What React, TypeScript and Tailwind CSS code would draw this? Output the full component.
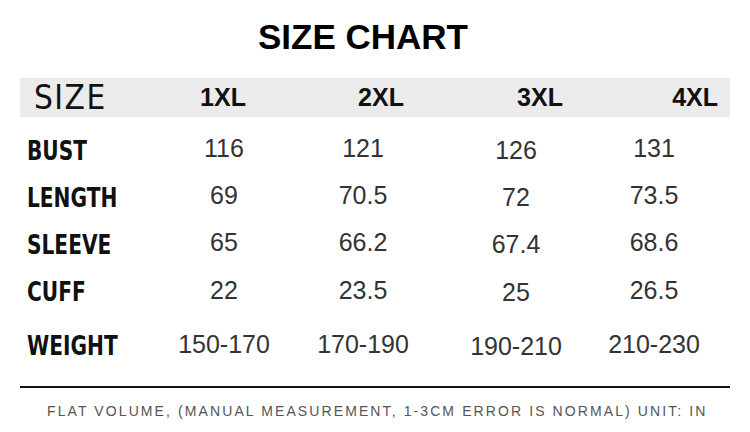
import React from "react";

const sizes = ["1XL", "2XL", "3XL", "4XL"];

// measurement rows, values in cm
const rows: { label: string; values: string[]; h: string }[] = [
  { label: "BUST", values: ["116", "121", "126", "131"], h: "h-[47px]" },
  { label: "LENGTH", values: ["69", "70.5", "72", "73.5"], h: "h-[47px]" },
  { label: "SLEEVE", values: ["65", "66.2", "67.4", "68.6"], h: "h-[47px]" },
  { label: "CUFF", values: ["22", "23.5", "25", "26.5"], h: "h-[48px]" },
  { label: "WEIGHT", values: ["150-170", "170-190", "190-210", "210-230"], h: "h-[60px]" },
];

const narrow = "font-['DejaVu_Sans_Condensed','Liberation_Sans',sans-serif]";

export default function App() {
  return (
    <div className="w-[750px] h-[432px] bg-white overflow-hidden font-['Liberation_Sans',Arial,sans-serif]">
      {/* title */}
      <div className="h-[78px] pt-[19px] pr-[24px] text-center">
        <h1 className="text-[35px] leading-[35px] font-bold text-black">SIZE CHART</h1>
      </div>

      {/* header band */}
      <div className="mx-[20px] h-[39px] bg-[#ebebeb] grid grid-cols-[124px_158px_158px_160px_1fr] items-center">
        <div className={`${narrow} pl-[14px] text-[33px] leading-none tracking-[1.5px] text-[#111]`}>SIZE</div>
        {sizes.map((s, i) => (
          <div
            key={s}
            className={`text-[25px] leading-none font-semibold text-[#111] ${i === 3 ? "text-right pr-[12px]" : "text-center"}`}
          >
            {s}
          </div>
        ))}
      </div>

      {/* data rows */}
      <div className="mx-[20px] mt-[11px]">
        {rows.map((r) => (
          <div key={r.label} className={`grid grid-cols-[134px_140px_138px_168px_108px] items-center ${r.h}`}>
            <div className="pl-[7px]">
              <span className={`${narrow} inline-block origin-left scale-x-[0.83] text-[27px] leading-none font-bold text-[#111]`}>
                {r.label}
              </span>
            </div>
            {r.values.map((v, i) => (
              <div
                key={i}
                className={`text-center text-[25px] leading-none text-[#333] ${i === 2 ? "pb-[2px]" : "pb-[6px]"}`}
              >
                {v}
              </div>
            ))}
          </div>
        ))}
      </div>

      <div className="mx-[20px] mt-[9px] h-[2px] bg-[#111]" />

      <p className="mt-[16px] pl-[47px] text-[14px] leading-none tracking-[2.1px] text-[#555] whitespace-nowrap">
        FLAT VOLUME, (MANUAL MEASUREMENT, 1-3CM ERROR IS NORMAL) UNIT: IN
      </p>
    </div>
  );
}
